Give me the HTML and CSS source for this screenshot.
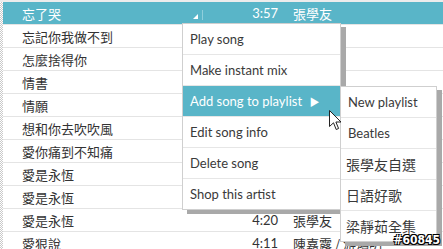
FILE: index.html
```html
<!DOCTYPE html>
<html>
<head>
  <title>Song list</title>
  <link rel="stylesheet" href="styles.css">
</head>
<body>
  <div class="page">
    <div class="grip"></div>
    <div class="songs">
      <div class="row selected">
        <span class="title">忘了哭</span>
        <span class="sort"></span>
        <span class="time">3:57</span>
        <span class="artist">張學友</span>
      </div>
      <div class="row"><span class="title">忘記你我做不到</span><span class="sort"></span></div>
      <div class="row"><span class="title">怎麼捨得你</span><span class="sort"></span></div>
      <div class="row"><span class="title">情書</span><span class="sort"></span></div>
      <div class="row"><span class="title">情願</span><span class="sort"></span></div>
      <div class="row"><span class="title">想和你去吹吹風</span><span class="sort"></span></div>
      <div class="row"><span class="title">愛你痛到不知痛</span><span class="sort"></span></div>
      <div class="row"><span class="title">愛是永恆</span><span class="sort"></span></div>
      <div class="row"><span class="title">愛是永恆</span><span class="sort"></span></div>
      <div class="row"><span class="title">愛是永恆</span><span class="sort"></span><span class="time">4:20</span><span class="artist">張學友</span></div>
      <div class="row"><span class="title">愛狠說</span><span class="sort"></span><span class="time">4:11</span><span class="artist">陳嘉露 / 游鴻明</span></div>
    </div>
  </div>

  <ul class="menu main-menu">
    <li>Play song</li>
    <li>Make instant mix</li>
    <li class="active">Add song to playlist <span class="arrow">&#9654;</span></li>
    <li>Edit song info</li>
    <li>Delete song</li>
    <li>Shop this artist</li>
  </ul>

  <ul class="menu sub-menu">
    <li>New playlist</li>
    <li>Beatles</li>
    <li class="cjk">張學友自選</li>
    <li class="cjk">日語好歌</li>
    <li class="cjk">梁靜茹全集</li>
  </ul>

  <svg class="cursor" width="13" height="21" viewBox="0 0 13 21">
    <path d="M0.5 0.5 L0.5 16.5 L4.5 12.8 L7.2 19.5 L9.6 18.5 L6.9 12 L12 12 Z" fill="#fff" stroke="#222" stroke-width="1" stroke-linejoin="round"/>
  </svg>

  <div class="stamp">#60845</div>
</body>
</html>
```

FILE: styles.css
```css
body {
  margin: 0;
  background: #fff;
  font-family: Lato, "Noto Sans CJK TC", sans-serif;
  overflow: hidden;
}

.page {
  display: flex;
  height: 249px;
  border-top: 2px solid #ececec;
}

.grip {
  width: 3px;
  flex-shrink: 0;
  background: repeating-conic-gradient(#c9c9c9 0 25%, #fff 0 50%) 0 0 / 2px 2px;
}

.songs {
  flex: 1;
}

.row {
  display: flex;
  align-items: center;
  height: 22px;
  border-bottom: 1px solid #e4e4e4;
  font-size: 13px;
  color: #333;
}

.row .title {
  width: 171px;
  flex-shrink: 0;
  padding-left: 19px;
  font-family: "Noto Sans CJK TC", sans-serif;
}

.row .sort {
  position: relative;
  width: 10px;
  height: 22px;
  flex-shrink: 0;
}

.row .time {
  width: 75px;
  text-align: right;
}

.row .artist {
  padding-left: 15px;
  white-space: nowrap;
  font-family: "Noto Sans CJK TC", sans-serif;
}

.row.selected {
  background: #59b5c8;
  color: #fff;
}

.row.selected .sort::before {
  content: "";
  position: absolute;
  left: 0;
  top: 12px;
  border-left: 5px solid transparent;
  border-bottom: 5px solid #fff;
}

.row.selected .sort::after {
  content: "";
  position: absolute;
  left: 9px;
  top: 8px;
  width: 1px;
  height: 10px;
  background: #8fcfdc;
}

.menu {
  position: absolute;
  margin: 0;
  padding: 0;
  list-style: none;
  background: #fff;
  border: 1px solid #cfcfcf;
  box-shadow: 5px 4px 0 #a9a9a9;
}

.menu li {
  height: 30px;
  line-height: 30px;
  padding-left: 7px;
  border-bottom: 1px solid #e6e6e6;
  font-size: 13px;
  color: #3a3a3a;
  white-space: nowrap;
}

.menu li:last-child {
  border-bottom: none;
}

.menu li.active {
  background: #59b5c8;
  color: #fff;
}

.menu .arrow {
  font-size: 10px;
  margin-left: 4px;
}

.menu li.cjk {
  font-family: "Noto Sans CJK TC", sans-serif;
  font-size: 14px;
  padding-left: 5px;
}

.main-menu {
  left: 182px;
  top: 23px;
  width: 157px;
}

.sub-menu {
  left: 340px;
  top: 86px;
  width: 95px;
}

.cursor {
  position: absolute;
  left: 329px;
  top: 110px;
}

.stamp {
  position: absolute;
  right: 3px;
  bottom: 2px;
  font-family: "DejaVu Sans Condensed", "DejaVu Sans", sans-serif;
  font-weight: bold;
  font-size: 12px;
  color: #fff;
  text-shadow: -1px -1px 0 #000, 1px -1px 0 #000, -1px 1px 0 #000, 1px 1px 0 #000;
}
```
